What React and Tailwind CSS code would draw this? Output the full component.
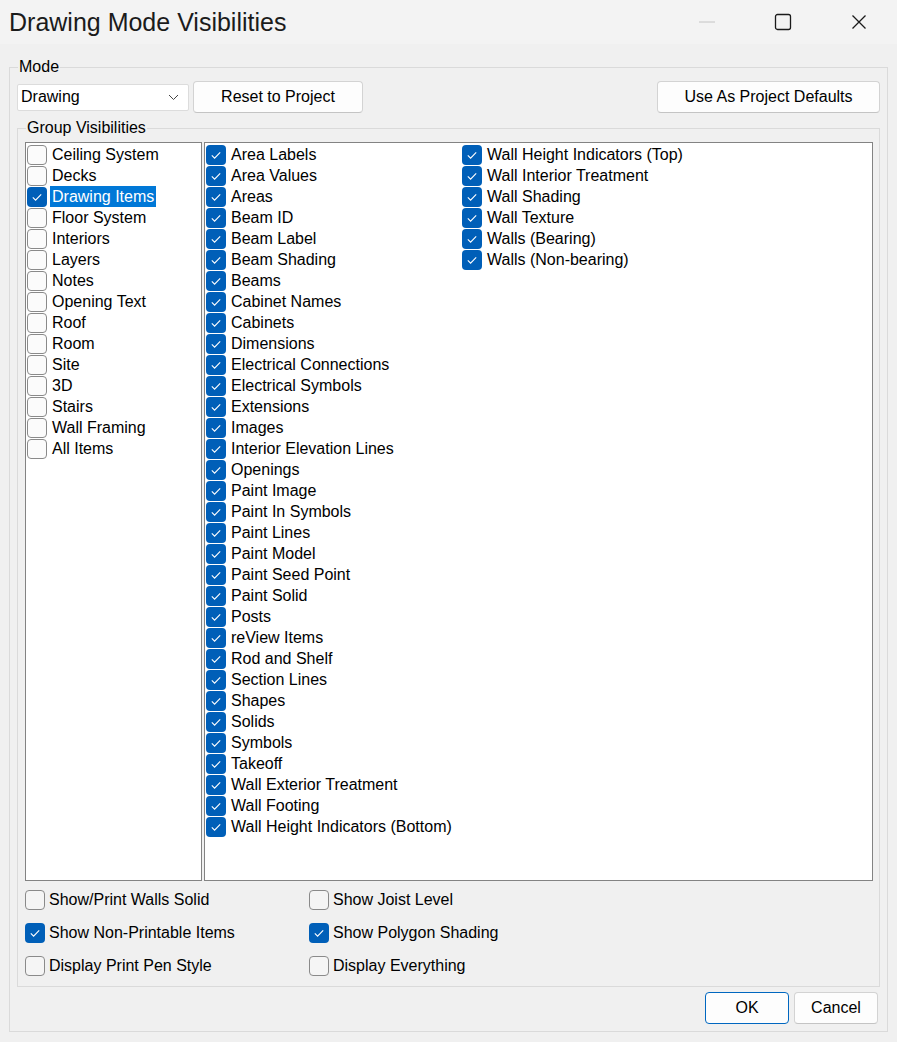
const GROUPS = [
  "Ceiling System",
  "Decks",
  "Drawing Items",
  "Floor System",
  "Interiors",
  "Layers",
  "Notes",
  "Opening Text",
  "Roof",
  "Room",
  "Site",
  "3D",
  "Stairs",
  "Wall Framing",
  "All Items",
];

const ITEMS_COL1 = [
  "Area Labels",
  "Area Values",
  "Areas",
  "Beam ID",
  "Beam Label",
  "Beam Shading",
  "Beams",
  "Cabinet Names",
  "Cabinets",
  "Dimensions",
  "Electrical Connections",
  "Electrical Symbols",
  "Extensions",
  "Images",
  "Interior Elevation Lines",
  "Openings",
  "Paint Image",
  "Paint In Symbols",
  "Paint Lines",
  "Paint Model",
  "Paint Seed Point",
  "Paint Solid",
  "Posts",
  "reView Items",
  "Rod and Shelf",
  "Section Lines",
  "Shapes",
  "Solids",
  "Symbols",
  "Takeoff",
  "Wall Exterior Treatment",
  "Wall Footing",
  "Wall Height Indicators (Bottom)",
];

const ITEMS_COL2 = [
  "Wall Height Indicators (Top)",
  "Wall Interior Treatment",
  "Wall Shading",
  "Wall Texture",
  "Walls (Bearing)",
  "Walls (Non-bearing)",
];

function Box({ checked, onList = false }) {
  if (checked) {
    return (
      <span className="flex h-[20px] w-[20px] shrink-0 items-center justify-center rounded-[4px] bg-[#005fb8]">
        <svg width="20" height="20" viewBox="0 0 20 20">
          <path d="M5.8 10.3 L8.6 13.1 L14.2 7.4" fill="none" stroke="#ffffff" strokeWidth="1.1" />
        </svg>
      </span>
    );
  }
  return (
    <span
      className={`h-[20px] w-[20px] shrink-0 rounded-[4px] border border-[#8a8a8a] ${onList ? "bg-[#fbfbfb]" : "bg-[#f5f5f5]"}`}
    />
  );
}

function ListRow({ label, checked, selected }) {
  return (
    <div className="flex h-[21px] items-center gap-[3px] whitespace-nowrap">
      <Box checked={checked} onList />
      <span className={`px-[2px] leading-[21px] ${selected ? "bg-[#0078d7] text-white" : ""}`}>{label}</span>
    </div>
  );
}

function Option({ label, checked }) {
  return (
    <div className="flex h-[33px] items-center gap-[4px] whitespace-nowrap">
      <Box checked={checked} />
      <span>{label}</span>
    </div>
  );
}

function Button({ children, className = "", primary = false }) {
  return (
    <button
      className={`flex h-[32px] items-center justify-center rounded-[4px] border bg-[#fdfdfd] ${primary ? "border-[#0067c0]" : "border-[#d3d3d3] border-b-[#c4c4c4]"} ${className}`}
    >
      {children}
    </button>
  );
}

export default function App() {
  return (
    <div className="relative h-[1042px] w-[897px] overflow-hidden bg-[#f0f0f0] font-['Liberation_Sans',Arial,sans-serif] text-[16px] text-black">
      {/* title bar */}
      <div className="flex h-[44px] items-center justify-between bg-[#f3f3f3]">
        <div className="pl-[9px] text-[25px] leading-none text-[#1b1b1b]">Drawing Mode Visibilities</div>
        <div className="flex h-full">
          <div className="flex w-[76px] items-center justify-center">
            <svg width="18" height="4" viewBox="0 0 18 4">
              <path d="M1 2 H17" stroke="#c4c4c4" strokeWidth="1" />
            </svg>
          </div>
          <div className="flex w-[76px] items-center justify-center">
            <svg width="18" height="18" viewBox="0 0 18 18">
              <rect x="1.5" y="1.5" width="15" height="15" rx="2" fill="none" stroke="#1a1a1a" strokeWidth="1.3" />
            </svg>
          </div>
          <div className="flex w-[76px] items-center justify-center">
            <svg width="16" height="16" viewBox="0 0 16 16">
              <path d="M1.5 1.5 L14.5 14.5 M14.5 1.5 L1.5 14.5" stroke="#1a1a1a" strokeWidth="1.3" />
            </svg>
          </div>
        </div>
      </div>

      {/* Mode group */}
      <fieldset className="mx-[9px] mt-[14px] border border-[#dadada] p-0">
        <legend className="ml-[8px] px-[1px] leading-[18px]">Mode</legend>
        <div className="px-[7px] pb-[7px] pt-[5px]">
          <div className="flex items-center">
            <div className="flex h-[27px] w-[172px] items-center justify-between rounded-[2px] border border-[#dcdcdc] bg-white pl-[3px] pr-[9px]">
              <span>Drawing</span>
              <svg width="11" height="7" viewBox="0 0 11 7">
                <path d="M1 1 L5.5 5.5 L10 1" fill="none" stroke="#444" strokeWidth="1" />
              </svg>
            </div>
            <Button className="ml-[4px] w-[170px]">Reset to Project</Button>
            <Button className="ml-auto w-[223px]">Use As Project Defaults</Button>
          </div>

          {/* Group Visibilities */}
          <fieldset className="mt-[6px] border border-[#dadada] p-0">
            <legend className="ml-[8px] px-[1px] leading-[18px]">Group Visibilities</legend>
            <div className="pl-[7px] pr-[6px] pb-[4px] pt-[5px]">
              <div className="flex h-[739px] gap-[2px]">
                <div className="w-[177px] border border-[#838383] bg-white pl-[1px] pt-[1px]">
                  {GROUPS.map((g) => (
                    <ListRow key={g} label={g} checked={g === "Drawing Items"} selected={g === "Drawing Items"} />
                  ))}
                </div>
                <div className="flex flex-1 border border-[#838383] bg-white pl-[1px] pt-[1px]">
                  <div className="w-[256px]">
                    {ITEMS_COL1.map((g) => (
                      <ListRow key={g} label={g} checked />
                    ))}
                  </div>
                  <div>
                    {ITEMS_COL2.map((g) => (
                      <ListRow key={g} label={g} checked />
                    ))}
                  </div>
                </div>
              </div>
              <div className="mt-[2px] grid grid-cols-[284px_1fr]">
                <Option label="Show/Print Walls Solid" />
                <Option label="Show Joist Level" />
                <Option label="Show Non-Printable Items" checked />
                <Option label="Show Polygon Shading" checked />
                <Option label="Display Print Pen Style" />
                <Option label="Display Everything" />
              </div>
            </div>
          </fieldset>

          <div className="mt-[5px] flex justify-end gap-[5px] pr-[2px]">
            <Button primary className="w-[84px]">OK</Button>
            <Button className="w-[84px]">Cancel</Button>
          </div>
        </div>
      </fieldset>
    </div>
  );
}
